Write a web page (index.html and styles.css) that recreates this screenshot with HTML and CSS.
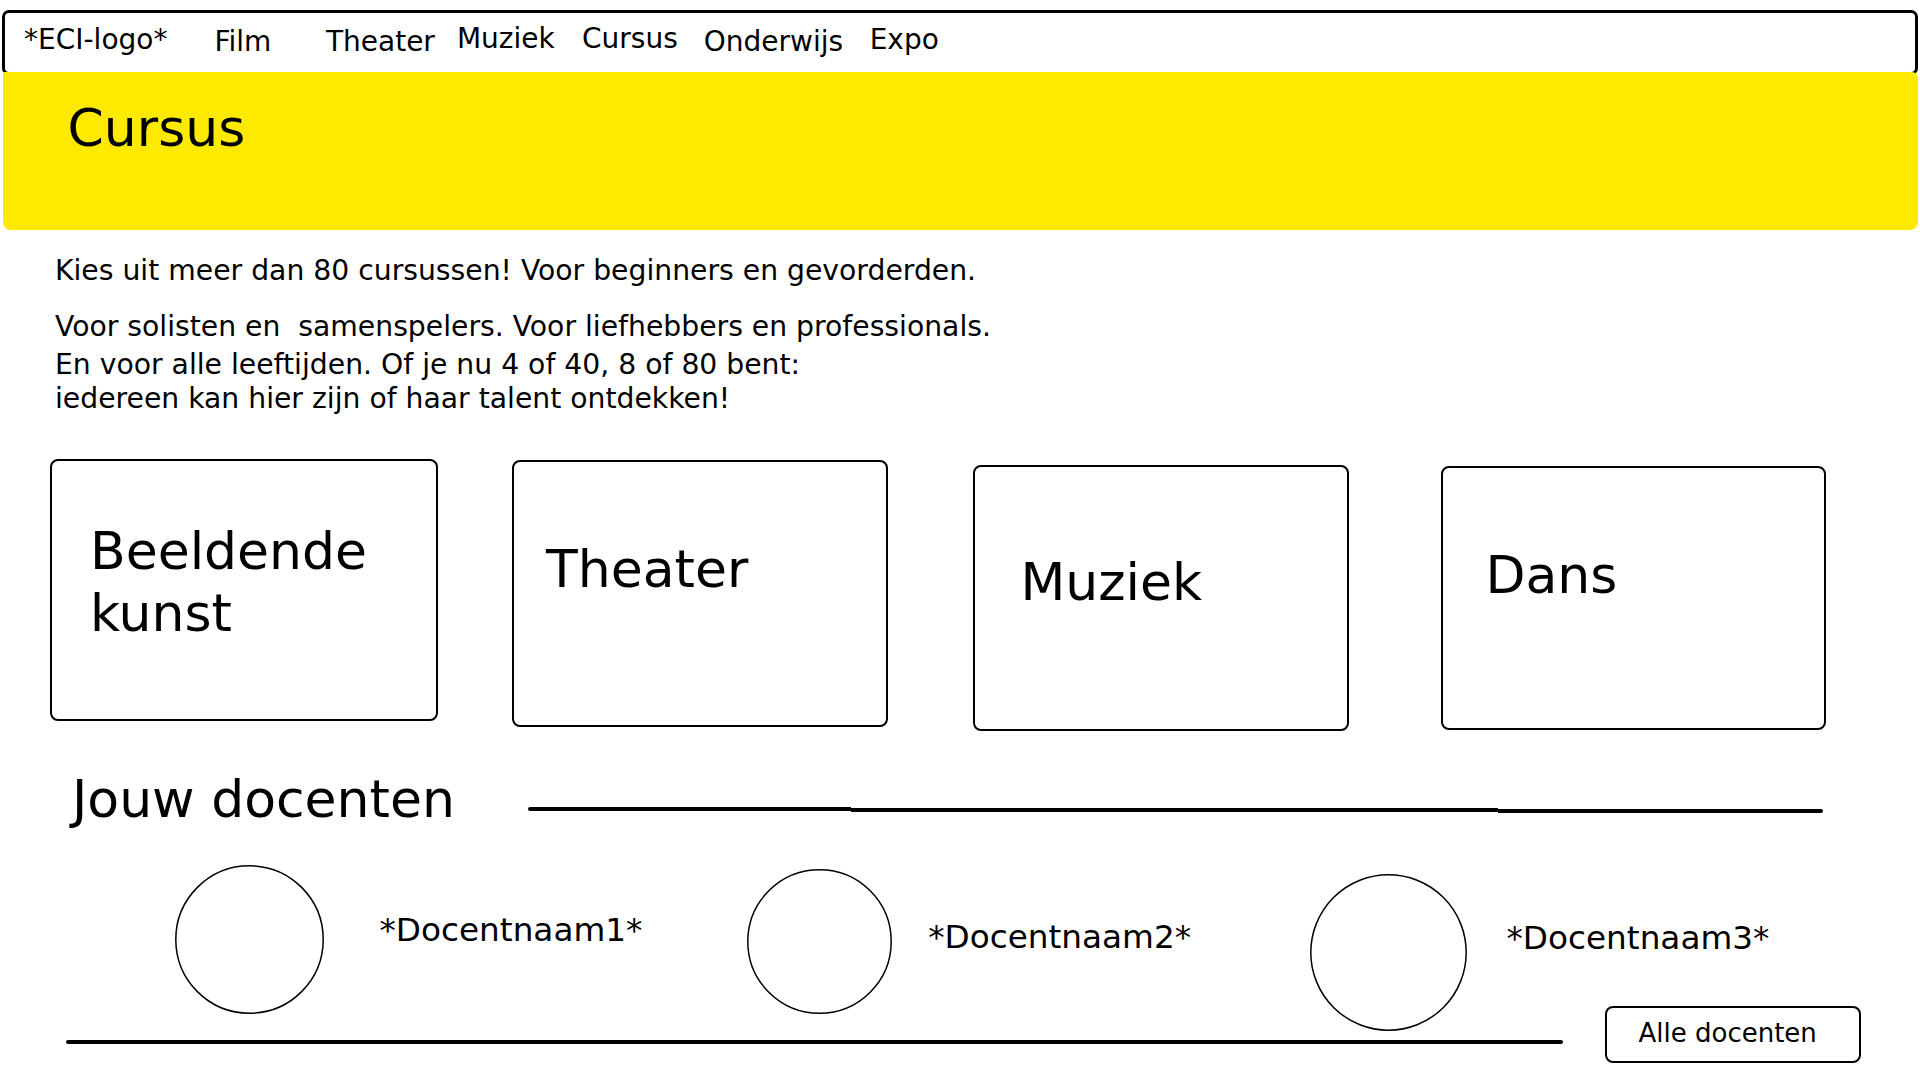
FILE: index.html
```html
<!DOCTYPE html>
<html lang="nl">
<head>
<meta charset="utf-8">
<title>Cursus</title>
<link rel="stylesheet" href="styles.css">
</head>
<body>
<nav class="nav">
  <span class="nav-item nav-logo">*ECI-logo*</span>
  <a class="nav-item nav-film">Film</a>
  <a class="nav-item nav-theater">Theater</a>
  <a class="nav-item nav-muziek">Muziek</a>
  <a class="nav-item nav-cursus">Cursus</a>
  <a class="nav-item nav-onderwijs">Onderwijs</a>
  <a class="nav-item nav-expo">Expo</a>
</nav>

<header class="hero">
  <h1 class="hero-title">Cursus</h1>
</header>

<section class="intro">
  <p class="intro-p intro-p1">Kies uit meer dan 80 cursussen! Voor beginners en gevorderden.</p>
  <p class="intro-p intro-p2">Voor solisten en&nbsp; samenspelers. Voor liefhebbers en professionals.</p>
  <p class="intro-p intro-p3">En voor alle leeftijden. Of je nu 4 of 40, 8 of 80 bent:<br>iedereen kan hier zijn of haar talent ontdekken!</p>
</section>

<section class="cards">
  <div class="card card-1">Beeldende<br>kunst</div>
  <div class="card card-2">Theater</div>
  <div class="card card-3">Muziek</div>
  <div class="card card-4">Dans</div>
</section>

<section class="docenten">
  <div class="docenten-head">
    <h2 class="docenten-title">Jouw docenten</h2>
    <div class="rule">
      <span class="rule-seg rule-seg-1"></span>
      <span class="rule-seg rule-seg-2"></span>
      <span class="rule-seg rule-seg-3"></span>
    </div>
  </div>

  <div class="teachers">
    <div class="teacher teacher-1">
      <svg class="avatar avatar-1" viewBox="0 0 149 149"><circle cx="74.5" cy="74.5" r="73.7" fill="none" stroke="#000" stroke-width="1.5"/></svg>
      <span class="teacher-name name-1">*Docentnaam1*</span>
    </div>
    <div class="teacher teacher-2">
      <svg class="avatar avatar-2" viewBox="0 0 145 145"><circle cx="72.5" cy="72.5" r="71.7" fill="none" stroke="#000" stroke-width="1.5"/></svg>
      <span class="teacher-name name-2">*Docentnaam2*</span>
    </div>
    <div class="teacher teacher-3">
      <svg class="avatar avatar-3" viewBox="0 0 157 157"><circle cx="78.5" cy="78.5" r="77.7" fill="none" stroke="#000" stroke-width="1.5"/></svg>
      <span class="teacher-name name-3">*Docentnaam3*</span>
    </div>
  </div>

  <div class="docenten-foot">
    <span class="foot-rule"></span>
    <a class="all-btn">Alle docenten</a>
  </div>
</section>
</body>
</html>
```

FILE: styles.css
```css
* {
  box-sizing: border-box;
}

html, body {
  margin: 0;
  padding: 0;
  background: #ffffff;
}

body {
  width: 1920px;
  height: 1080px;
  overflow: hidden;
  font-family: "DejaVu Sans", "Noto Sans", sans-serif;
  color: #000000;
}

/* ---------- navigation ---------- */
.nav {
  display: flex;
  align-items: flex-start;
  height: 65px;
  margin: 10px 2px 0 2px;
  padding-top: 9px;
  border: 3px solid #000000;
  border-radius: 7px;
}

.nav-item {
  font-size: 28px;
  line-height: normal;
  color: #000000;
  text-decoration: none;
  white-space: nowrap;
}

.nav-logo      { margin-left: 19px;   margin-top: 1px; }
.nav-film      { margin-left: 47px;   margin-top: 3px; }
.nav-theater   { margin-left: 54.6px; margin-top: 3px; }
.nav-muziek    { margin-left: 22px;   margin-top: 0; }
.nav-cursus    { margin-left: 27.3px; margin-top: 0; }
.nav-onderwijs { margin-left: 26px;   margin-top: 3px; }
.nav-expo      { margin-left: 26.6px; margin-top: 1px; }

/* ---------- hero ---------- */
.hero {
  height: 158px;
  margin: -3px 2px 0 3px;
  padding: 26px 0 0 64.5px;
  background: #fdea00;
  border-radius: 0 6px 8px 8px;
}

.hero-title {
  margin: 0;
  font-size: 52px;
  font-weight: normal;
  line-height: normal;
}

/* ---------- intro ---------- */
.intro {
  padding-left: 55px;
}

.intro-p {
  margin: 0;
  font-size: 28.25px;
  line-height: normal;
  white-space: nowrap;
}

.intro-p1 { margin-top: 24px; }
.intro-p2 { margin-top: 23px; }
.intro-p3 { margin-top: 5px; line-height: 33.5px; }

/* ---------- cards ---------- */
.cards {
  display: flex;
  align-items: flex-start;
  margin-top: 44.2px;
  padding-left: 50px;
}

.card {
  flex: none;
  border: 2px solid #000000;
  border-radius: 8px;
  font-size: 52px;
  line-height: normal;
}

.card-1 { width: 388px; height: 262px; margin: 0;            padding: 59.3px 0 0 38px; line-height: 62px; }
.card-2 { width: 376px; height: 267px; margin: 1px 0 0 74px; padding: 77px 0 0 32px; }
.card-3 { width: 376px; height: 266px; margin: 6px 0 0 85px; padding: 85px 0 0 45.4px; }
.card-4 { width: 385px; height: 264px; margin: 7px 0 0 92px; padding: 77px 0 0 42.4px; }

/* ---------- docenten ---------- */
.docenten-head {
  display: flex;
  align-items: flex-start;
  height: 59.6px;
  margin-top: 37.4px;
  padding-left: 72px;
}

.docenten-title {
  flex: none;
  width: 456px;
  margin: 0;
  font-size: 52px;
  font-weight: normal;
  line-height: normal;
  white-space: nowrap;
}

.rule {
  display: flex;
  align-items: flex-start;
}

.rule-seg {
  display: block;
  height: 4px;
  background: #000000;
}

.rule-seg-1 { width: 323px; margin-top: 38.1px; border-radius: 2px 0 0 2px; }
.rule-seg-2 { width: 647px; margin-top: 39.1px; }
.rule-seg-3 { width: 325px; margin-top: 40.1px; border-radius: 0 2px 2px 0; }

.teachers {
  display: flex;
  align-items: flex-start;
  height: 178px;
  padding-left: 174.5px;
}

.teacher {
  flex: none;
  display: flex;
  align-items: flex-start;
}

.teacher-1 { width: 572.5px; }
.teacher-2 { width: 563px; }
.teacher-3 { width: 500px; }

.avatar {
  flex: none;
  display: block;
  overflow: visible;
}

.avatar-1 { width: 149px; height: 149px; margin-top: 37px; }
.avatar-2 { width: 145px; height: 145px; margin-top: 41.3px; }
.avatar-3 { width: 157px; height: 157px; margin-top: 46.3px; }

.teacher-name {
  font-size: 32.7px;
  line-height: normal;
  white-space: nowrap;
}

.name-1 { margin: 82.7px 0 0 56px; }
.name-2 { margin: 89.4px 0 0 36.2px; }
.name-3 { margin: 91px 0 0 39.5px; }

.docenten-foot {
  display: flex;
  align-items: flex-start;
  padding-left: 65.5px;
}

.foot-rule {
  flex: none;
  display: block;
  width: 1497.5px;
  height: 4px;
  margin-top: 34px;
  background: #000000;
  border-radius: 2px;
}

.all-btn {
  flex: none;
  display: block;
  width: 256px;
  height: 57px;
  margin-left: 41.5px;
  padding: 10px 0 0 32px;
  border: 2px solid #000000;
  border-radius: 8px;
  font-size: 26px;
  line-height: normal;
  color: #000000;
  text-decoration: none;
  white-space: nowrap;
}
```
